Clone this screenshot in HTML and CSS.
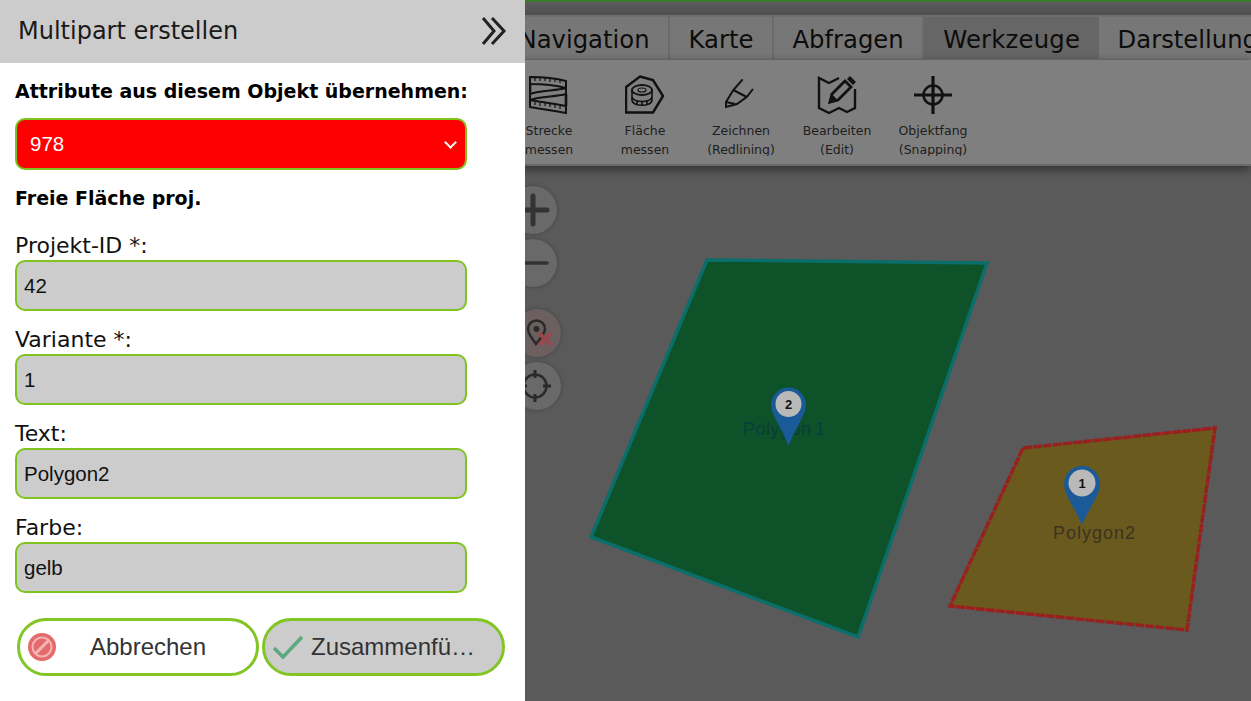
FILE: index.html
```html
<!DOCTYPE html>
<html lang="de">
<head>
  <meta charset="UTF-8">
  <title>Multipart erstellen</title>
  <link rel="stylesheet" href="styles.css">
</head>
<body>
<div id="app">
  <div id="top-strip"></div>
  <nav id="tabs">
    <a class="tab">Navigation</a>
    <a class="tab">Karte</a>
    <a class="tab">Abfragen</a>
    <a class="tab active">Werkzeuge</a>
    <a class="tab">Darstellung</a>
  </nav>
  <div id="toolbar">
    <div class="tool">
      <svg viewBox="0 0 40 40" fill="none" stroke="#111" stroke-width="2">
        <path d="M1 2 C13 2 26 3 37 6 V13 C26 10 13 9 1 9 Z"/>
        <path d="M37 13 C26 16 12 15 1 19 V25 C12 21 26 22 37 19 Z"/>
        <path d="M1 25 C13 27 26 29 37 31 V38 C26 36 13 34 1 32 Z"/>
        <path d="M1 9 V19 M37 19 V31" stroke-width="2.600"/>
        <path d="M6 3 v3 M11 3 v3 M16 3 v3 M21 4 v3 M26 4 v3 M31 5 v3 M6 27 v3 M11 28 v3 M16 28 v3 M21 29 v3 M26 30 v3 M31 31 v3" stroke-width="1.200"/>
      </svg>
      <span class="tool-label">Strecke<br>messen</span>
    </div>
    <div class="tool">
      <svg viewBox="0 0 40 40" fill="none" stroke="#111" stroke-width="2.500">
        <path d="M15 1.500 L28 5 L38 21 L28 37.500 H1 V12 Z"/>
        <ellipse cx="17" cy="15" rx="10" ry="5" stroke-width="1.800"/>
        <ellipse cx="17" cy="15" rx="4" ry="2" stroke-width="1.200"/>
        <path d="M7 15 V25 C7 32 27 32 27 25 V15 M7 22 C9 28 25 28 27 22 M12 25 v4 M17 26 v4 M22 25 v4" stroke-width="1.600"/>
      </svg>
      <span class="tool-label">Fläche<br>messen</span>
    </div>
    <div class="tool">
      <svg viewBox="0 0 40 40" fill="none" stroke="#111" stroke-width="2">
        <path d="M21.700 4.300 L12.300 15 L5 27 V32 L16 29 L25.700 22 L32 14"/>
        <path d="M12.300 15 L25.700 22"/>
        <path d="M5 27 L14 29"/>
      </svg>
      <span class="tool-label">Zeichnen<br>(Redlining)</span>
    </div>
    <div class="tool">
      <svg viewBox="0 0 40 40" fill="none" stroke="#111" stroke-width="2.400">
        <path d="M22 3 L12 8 L2 3 V33 L12 38 L22 33 L30 37 L38 33 V14"/>
        <path d="M13 27 L15 19 L28 6 L34 12 L21 25 Z" stroke-width="2.800"/>
        <path d="M13 27 L15 21 L19 25 Z" fill="#111"/>
        <path d="M30 4 L33 1 L39 7 L36 10 Z" fill="#111" stroke="none"/>
      </svg>
      <span class="tool-label">Bearbeiten<br>(Edit)</span>
    </div>
    <div class="tool">
      <svg viewBox="0 0 40 40" fill="none" stroke="#111">
        <circle cx="20" cy="20" r="9.500" stroke-width="2.500"/>
        <path d="M20 1 V39" stroke-width="3.200"/>
        <path d="M1 20 H39" stroke-width="3.200"/>
      </svg>
      <span class="tool-label">Objektfang<br>(Snapping)</span>
    </div>
  </div>
  <main id="map">
    <svg id="map-canvas" viewBox="0 166 1251 535">
      <polygon class="area-green" points="707,260 987,263 858,637 591,537"/>
      <polygon class="area-yellow" points="1023,448 1215,428 1187,630 950,606"/>
      <text class="area-text green-text" x="743" y="435">Polygon 1</text>
      <text class="area-text yellow-text" x="1053" y="539">Polygon2</text>
      <path class="pin" d="M771 405 A17.500 17.500 0 1 1 806 405 C806 415 795 428 788.500 446 C782 428 771 415 771 405 Z"/>
      <circle class="pin-dot" cx="788.500" cy="404" r="13"/>
      <text class="pin-text" x="788.500" y="409">2</text>
      <path class="pin" d="M1064 484 A18 18 0 1 1 1100 484 C1100 495 1089 508 1082 525 C1075 508 1064 495 1064 484 Z"/>
      <circle class="pin-dot" cx="1082" cy="483" r="13.500"/>
      <text class="pin-text" x="1082" y="488">1</text>
    </svg>
    <button class="map-btn zoom-in">
      <svg viewBox="0 0 48 48" stroke="#333" stroke-width="5" stroke-linecap="round"><path d="M24 10 V38 M10 24 H38"/></svg>
    </button>
    <button class="map-btn zoom-out">
      <svg viewBox="0 0 48 48" stroke="#333" stroke-width="3.500" stroke-linecap="round"><path d="M10 24 H38"/></svg>
    </button>
    <button class="map-btn pin-off">
      <svg viewBox="0 0 48 48" fill="none">
        <path d="M23 35 C19 29 15 25 15 20 A8.500 8.500 0 0 1 32 20 C32 24 28 29 23 35 Z" stroke="#2a2a2a" stroke-width="2.500"/>
        <circle cx="23.500" cy="20" r="3" fill="#2a2a2a"/>
        <path d="M26 24 L38 36 M38 24 L26 36" stroke="#96484c" stroke-width="4"/>
      </svg>
    </button>
    <button class="map-btn locate">
      <svg viewBox="0 0 48 48" fill="none" stroke="#2a2a2a">
        <circle cx="22" cy="24" r="11.500" stroke-width="2.500"/>
        <path d="M22 8 V16 M22 32 V40 M6 24 H14 M30 24 H38" stroke-width="3"/>
      </svg>
    </button>
  </main>
</div>

<aside id="panel">
  <header id="panel-head">
    <h1>Multipart erstellen</h1>
    <svg class="collapse" viewBox="0 0 26 28" fill="none" stroke="#222" stroke-width="3">
      <path d="M2 1 L13 14 L2 27"/>
      <path d="M11 1 L23 14 L11 27"/>
    </svg>
  </header>
  <form id="panel-body">
    <label class="strong" for="source">Attribute aus diesem Objekt übernehmen:</label>
    <div class="select-wrap">
      <select id="source"><option>978</option></select>
    </div>
    <p class="strong layer-name">Freie Fläche proj.</p>
    <div class="field">
      <label for="projekt">Projekt-ID *:</label>
      <input id="projekt" type="text" value="42">
    </div>
    <div class="field">
      <label for="variante">Variante *:</label>
      <input id="variante" type="text" value="1">
    </div>
    <div class="field">
      <label for="text">Text:</label>
      <input id="text" type="text" value="Polygon2">
    </div>
    <div class="field">
      <label for="farbe">Farbe:</label>
      <input id="farbe" type="text" value="gelb">
    </div>
    <div id="actions">
      <button type="button" class="action cancel">
        <svg viewBox="0 0 28 28" fill="none">
          <circle cx="14" cy="14" r="14" fill="#e36b6b"/>
          <circle cx="14" cy="14" r="9.500" stroke="#f5b5b5" stroke-width="2"/>
          <path d="M7 21 L21 7" stroke="#f5b5b5" stroke-width="3"/>
        </svg>
        <span>Abbrechen</span>
      </button>
      <button type="button" class="action merge">
        <svg viewBox="0 0 30 26" fill="none" stroke="#5ca87f" stroke-width="3.500">
          <path d="M1 14 L10 23 L29 3"/>
        </svg>
        <span>Zusammenführen</span>
      </button>
    </div>
  </form>
</aside>
</body>
</html>
```

FILE: styles.css
```css
* {
  box-sizing: border-box;
}

html, body {
  width: 100%;
  height: 100%;
  overflow: hidden;
  margin: 0;
  padding: 0;
  font: 22px "DejaVu Sans", sans-serif;
  background: #5a5a5a;
  color: #000;
}

#app {
  display: flex;
  flex-direction: column;
  width: 100%;
  height: 100%;
}

#top-strip {
  flex: 0 0 17px;
  background: linear-gradient(#3c7a2c 0, #3c7a2c 2px, #5c5c5c 2px, #4f4f4f 15px, #6e6e6e 15px);
}

#tabs {
  display: flex;
  flex: 0 0 43px;
  padding-left: 500px;
  overflow: hidden;
  background: #777;
  border-bottom: 1px solid #717171;
  white-space: nowrap;
}

.tab {
  padding: 0 18.5px;
  font-size: 24.3px;
  line-height: 46px;
  color: #0c0c0c;
  border-right: 2px solid #6b6b6b;
}

.tab.active {
  background: #666;
  border-right: none;
  padding: 0 19px 0 19px;
  letter-spacing: 0.2px;
}

.tab:last-child {
  border-right: none;
}

#toolbar {
  display: flex;
  position: relative;
  z-index: 2;
  flex: 0 0 106px;
  padding-left: 501px;
  background: #7f7f7f;
  border-bottom: 2px solid #6a6a6a;
  box-shadow: 0 3px 10px rgba(0, 0, 0, 0.5);
}

.tool {
  display: flex;
  flex-direction: column;
  align-items: center;
  width: 96px;
  padding-top: 15px;
}

.tool svg {
  flex: none;
  width: 40px;
  height: 40px;
}

.tool-label {
  height: 35px;
  margin-top: 6px;
  overflow: hidden;
  font-size: 12.5px;
  line-height: 19px;
  text-align: center;
  white-space: nowrap;
  color: #1d1d1d;
}

#map {
  position: relative;
  flex: 1;
  overflow: hidden;
}

#map-canvas {
  display: block;
  width: 100%;
  height: 100%;
}

.area-green {
  fill: #0d5229;
  stroke: #0a6e6a;
  stroke-width: 3.5;
}

.area-yellow {
  fill: #6b5a1e;
  stroke: #98201f;
  stroke-width: 3.5;
  stroke-dasharray: 9 1;
}

.area-text {
  font: 18px "Liberation Sans", sans-serif;
}

.green-text {
  fill: #0a3d3d;
  letter-spacing: 0.5px;
  word-spacing: -2px;
}

.yellow-text {
  fill: #3d3222;
  letter-spacing: 1px;
}

.pin {
  fill: #1b5a98;
}

.pin-dot {
  fill: #b9b9b9;
}

.pin-text {
  font: bold 13px "Liberation Sans", sans-serif;
  text-anchor: middle;
  fill: #111;
}

.map-btn {
  position: absolute;
  width: 48px;
  height: 48px;
  padding: 0;
  border: none;
  border-radius: 50%;
  background: #696969;
  box-shadow: 0 0 4px rgba(0, 0, 0, 0.25);
}

.map-btn svg {
  display: block;
  width: 48px;
  height: 48px;
}

.zoom-in {
  left: 509px;
  top: 20px;
}

.zoom-out {
  left: 509px;
  top: 73px;
}

.pin-off {
  left: 513px;
  top: 143px;
  background: #6b5f60;
}

.locate {
  left: 513px;
  top: 196px;
}

#panel {
  position: absolute;
  left: 0;
  top: 0;
  z-index: 10;
  width: 525px;
  height: 100%;
  background: #fff;
}

#panel-head {
  display: flex;
  align-items: center;
  justify-content: space-between;
  height: 63px;
  padding: 0 18px 2px 18px;
  background: #ccc;
}

#panel-head h1 {
  margin: 0;
  font-size: 24px;
  font-weight: normal;
  color: #1a1a1a;
}

.collapse {
  width: 26px;
  height: 28px;
}

#panel-body {
  display: flex;
  flex-direction: column;
  width: 452px;
  margin: 0 0 0 15px;
  padding-top: 16px;
}

.strong {
  margin: 0;
  font-size: 19px;
  font-weight: bold;
  line-height: 24px;
  white-space: nowrap;
}

.select-wrap {
  position: relative;
  margin-top: 15px;
}

.select-wrap::after {
  content: "";
  position: absolute;
  right: 12px;
  top: 20px;
  width: 7px;
  height: 7px;
  border-right: 2px solid #fff;
  border-bottom: 2px solid #fff;
  transform: rotate(45deg);
}

select {
  display: block;
  width: 100%;
  height: 52px;
  padding: 0 13px 2px;
  font: 20.5px "Liberation Sans", sans-serif;
  color: #fff;
  background: #f00;
  border: 2px solid #7fc41e;
  border-radius: 10px;
  outline: none;
  appearance: none;
  -webkit-appearance: none;
}

.layer-name {
  margin-top: 16px;
  margin-bottom: 17px;
}

.field {
  display: flex;
  flex-direction: column;
  height: 94px;
}

.field label {
  height: 27px;
  line-height: 25px;
  margin-top: 6px;
  color: #111;
}

.field input {
  display: block;
  width: 100%;
  height: 51px;
  padding: 0 7px;
  font: 20.5px "Liberation Sans", sans-serif;
  color: #111;
  background: #ccc;
  border: 2px solid #7fc41e;
  border-radius: 10px;
  outline: none;
}

#actions {
  display: flex;
  gap: 3px;
  width: 488px;
  margin: 15px 0 0 2px;
}

.action {
  display: flex;
  align-items: center;
  flex: 0 0 242px;
  min-width: 0;
  height: 58px;
  padding: 0 8px;
  font: 24px "Liberation Sans", sans-serif;
  color: #333;
  background: #fff;
  border: 3px solid #82c524;
  border-radius: 29px;
}

.action svg {
  flex: none;
}

.action span {
  flex: 1;
  min-width: 0;
  overflow: hidden;
  white-space: nowrap;
  text-overflow: ellipsis;
}

.cancel svg {
  width: 28px;
  height: 28px;
}

.cancel span {
  padding: 0 12px 0 4px;
  text-align: center;
}

.merge {
  flex-basis: 243px;
  padding-right: 22px;
  background: #ccc;
}

.merge svg {
  width: 30px;
  height: 26px;
  margin-right: 8px;
}
```
